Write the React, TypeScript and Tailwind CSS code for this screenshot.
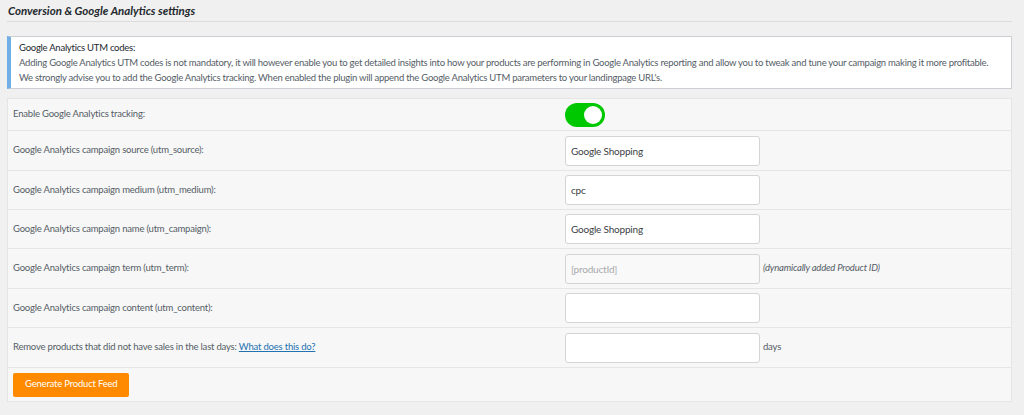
import { FC } from 'react';

const font = { fontFamily: 'Lato, "Open Sans", sans-serif' };

type Row = {
  label: string;
  value?: string;
  placeholder?: string;
  readOnly?: boolean;
  suffix?: string;
  suffixItalic?: boolean;
  link?: string;
  tall?: boolean;
};

const rows: Row[] = [
  { label: 'Google Analytics campaign source (utm_source):', value: 'Google Shopping', tall: true },
  { label: 'Google Analytics campaign medium (utm_medium):', value: 'cpc' },
  { label: 'Google Analytics campaign name (utm_campaign):', value: 'Google Shopping' },
  {
    label: 'Google Analytics campaign term (utm_term):',
    placeholder: '[productId]',
    readOnly: true,
    suffix: '(dynamically added Product ID)',
    suffixItalic: true,
    tall: true,
  },
  { label: 'Google Analytics campaign content (utm_content):', value: '' },
  {
    label: 'Remove products that did not have sales in the last days:',
    value: '',
    suffix: 'days',
    link: 'What does this do?',
    tall: true,
  },
];

const Toggle: FC = () => (
  <div className="relative w-[40px] h-[24px] rounded-full bg-[#00c800]">
    <div className="absolute right-[3px] top-[3px] w-[18px] h-[18px] rounded-full bg-white" />
  </div>
);

export default function App() {
  return (
    <div
      className="min-h-[415px] bg-[#f0f0f0] pl-[7px] pr-[12px] pt-[4px] text-[9.5px] tracking-[-0.2px] text-[#555d66]"
      style={font}
    >
      <h2 className="pb-[4px] pl-[1px] text-[11.5px] tracking-normal font-bold italic text-[#23282d] border-b border-[#dcdcdc] leading-[13px]">
        Conversion &amp; Google Analytics settings
      </h2>

      <div className="mt-[14px] bg-white border border-[#ccd0d4] border-l-4 border-l-[#72aee6] pl-[8px] pr-[2px] py-[3px] leading-[15px] tracking-[-0.25px]">
        <div className="text-[#23282d]">Google Analytics UTM codes:</div>
        <div className="whitespace-nowrap">
          Adding Google Analytics UTM codes is not mandatory, it will however enable you to get detailed insights into how your products are performing in Google Analytics reporting and allow you to tweak and tune your campaign making it more profitable.
        </div>
        <div>
          We strongly advise you to add the Google Analytics tracking. When enabled the plugin will append the Google Analytics UTM parameters to your landingpage URL's.
        </div>
      </div>

      <div className="mt-[9px] bg-[#f7f7f7] border border-[#e5e5e5]">
        <div className="flex items-center h-[32px] border-b border-[#e5e5e5]">
          <div className="w-[557px] pl-[5px]">Enable Google Analytics tracking:</div>
          <Toggle />
        </div>

        {rows.map((row) => (
          <div
            key={row.label}
            className={`flex items-center border-b border-[#e5e5e5] ${row.tall ? 'h-[40px]' : 'h-[39px]'}`}
          >
            <div className="w-[557px] pl-[5px]">
              {row.label}
              {row.link && (
                <>
                  {' '}
                  <a href="#" className="text-[#2271b1] underline">
                    {row.link}
                  </a>
                </>
              )}
            </div>
            <input
              type="text"
              defaultValue={row.value}
              placeholder={row.placeholder}
              readOnly={row.readOnly}
              className={`w-[195px] h-[30px] px-[5px] rounded-[3px] border border-[#d4d4d4] text-[10px] text-[#3c4146] placeholder:text-[#a7aaad] focus:outline-none ${
                row.readOnly ? 'bg-[#f9f9f9]' : 'bg-white'
              }`}
              style={font}
            />
            {row.suffix && (
              <span className={`ml-[3px] ${row.suffixItalic ? 'italic' : ''}`}>{row.suffix}</span>
            )}
          </div>
        ))}

        <div className="flex items-center h-[33px] pl-[5px]">
          <button
            type="button"
            className="h-[24px] px-[12px] rounded-[2px] bg-[#ff8a00] text-white text-[9.5px] tracking-[-0.2px]"
            style={font}
          >
            Generate Product Feed
          </button>
        </div>
      </div>
    </div>
  );
}
